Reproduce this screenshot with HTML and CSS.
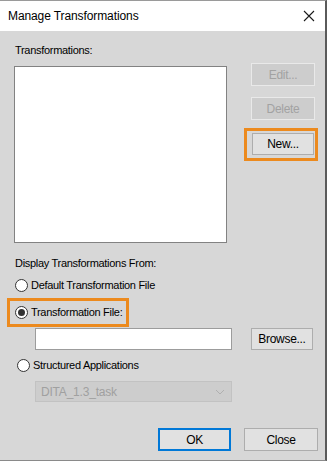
FILE: index.html
```html
<!DOCTYPE html>
<html lang="en">
<head>
  <meta charset="UTF-8" />
  <title>Manage Transformations</title>
  <link rel="stylesheet" href="styles.css">
</head>
<body>

  <div class="dialog">
    <div class="titlebar">
      <span class="title">Manage Transformations</span>
      <svg class="close-x" width="12" height="12" viewBox="0 0 12 12">
        <path d="M1 1 L11 11 M11 1 L1 11" stroke="#1a1a1a" stroke-width="1.1" fill="none"/>
      </svg>
    </div>

    <div class="content">
      <div class="label">Transformations:</div>

      <div class="list-row">
        <div class="listbox"></div>
        <div class="side-buttons">
          <button class="btn disabled">Edit...</button>
          <button class="btn disabled">Delete</button>
          <div class="highlight new-box">
            <button class="btn new-btn">New...</button>
          </div>
        </div>
      </div>

      <div class="label from-label">Display Transformations From:</div>

      <div class="radio-row first">
        <span class="radio"></span>
        <span>Default Transformation File</span>
      </div>

      <div class="highlight radio-box">
        <span class="radio checked"></span>
        <span>Transformation File:</span>
      </div>

      <div class="file-row">
        <div class="textbox"></div>
        <button class="btn browse">Browse...</button>
      </div>

      <div class="radio-row third">
        <span class="radio"></span>
        <span>Structured Applications</span>
      </div>

      <div class="select">
        <span>DITA_1.3_task</span>
        <svg width="10" height="6" viewBox="0 0 10 6">
          <path d="M1 1 L5 5 L9 1" stroke="#b0b0b0" stroke-width="1" fill="none"/>
        </svg>
      </div>

      <div class="footer">
        <button class="btn ok">OK</button>
        <button class="btn close">Close</button>
      </div>
    </div>
  </div>

</body>
</html>
```

FILE: styles.css
```css
* {
  box-sizing: border-box;
  margin: 0;
  padding: 0;
}

body {
  background: #ffffff;
  font-family: 'Liberation Sans', Arial, sans-serif;
  font-size: 11px;
  color: #000000;
}

.dialog {
  width: 327px;
  height: 461px;
  background: #d7d7d7;
  border-top: 1px solid #9a9a9a;
  border-right: 2px solid #5a5a5a;
  border-bottom: 1px solid #8a8a8a;
}

.titlebar {
  height: 30px;
  background: #ffffff;
  display: flex;
  align-items: center;
  justify-content: space-between;
  padding: 0 10px 0 8px;
}

.title {
  font-size: 12px;
  letter-spacing: -0.1px;
  color: #000000;
}

.close-x {
  margin-top: -1px;
}

.content {
  padding: 13px 0 0 14px;
}

.label {
  line-height: 13px;
  height: 13px;
  letter-spacing: -0.3px;
  margin-left: 1px;
}

.list-row {
  display: flex;
  margin-top: 6px;
}

.listbox {
  width: 213px;
  height: 177px;
  margin-top: 3px;
  background: #ffffff;
  border: 1px solid #828282;
}

.side-buttons {
  display: flex;
  flex-direction: column;
  margin-left: 24px;
}

.btn {
  font-family: 'Liberation Sans', Arial, sans-serif;
  font-size: 12px;
  letter-spacing: -0.3px;
  height: 23px;
  background: #e1e1e1;
  border: 1px solid #adadad;
  color: #000000;
}

.btn.disabled {
  width: 64px;
  background: #cdcdcd;
  border-color: #e9e9e9;
  color: #a2a2a2;
  margin-bottom: 11px;
}

.highlight {
  border: 3px solid #ec8a1e;
}

.new-box {
  width: 74px;
  margin-left: -7px;
  margin-top: -3px;
  padding: 2px 2px 3px 5px;
}

.new-btn {
  width: 62px;
  height: 22px;
}

.from-label {
  margin-top: 14px;
}

.radio-row {
  display: flex;
  align-items: center;
  height: 14px;
  letter-spacing: -0.3px;
}

.radio-row.first {
  margin-top: 8px;
  padding-left: 1px;
}

.radio-row.third {
  margin-top: 8px;
  padding-left: 3px;
}

.radio {
  width: 13px;
  height: 13px;
  border: 1px solid #333333;
  border-radius: 50%;
  background: #ffffff;
  margin-right: 3px;
  display: flex;
  align-items: center;
  justify-content: center;
}

.radio.checked::after {
  content: '';
  width: 7px;
  height: 7px;
  border-radius: 50%;
  background: #333333;
}

.radio-box {
  display: flex;
  align-items: center;
  width: 122px;
  height: 29px;
  margin-left: -7px;
  margin-top: 6px;
  padding: 0 0 1px 5px;
  letter-spacing: -0.3px;
}

.file-row {
  display: flex;
  margin-top: 1px;
  margin-left: 21px;
}

.textbox {
  width: 197px;
  height: 22px;
  background: #ffffff;
  border: 1px solid #9c9c9c;
}

.browse {
  width: 62px;
  height: 22px;
  margin-left: 19px;
}

.select {
  display: flex;
  align-items: center;
  justify-content: space-between;
  width: 197px;
  height: 21px;
  margin-top: 9px;
  margin-left: 21px;
  padding: 0 6px 0 5px;
  background: #cdcdcd;
  border: 1px solid #c2c2c2;
  color: #a0a0a0;
  font-size: 12px;
  letter-spacing: -0.2px;
}

.footer {
  display: flex;
  justify-content: flex-end;
  gap: 13px;
  margin-top: 26px;
  padding-right: 7px;
}

.ok {
  width: 73px;
  border: 2px solid #0078d7;
}

.close {
  width: 74px;
}
```
